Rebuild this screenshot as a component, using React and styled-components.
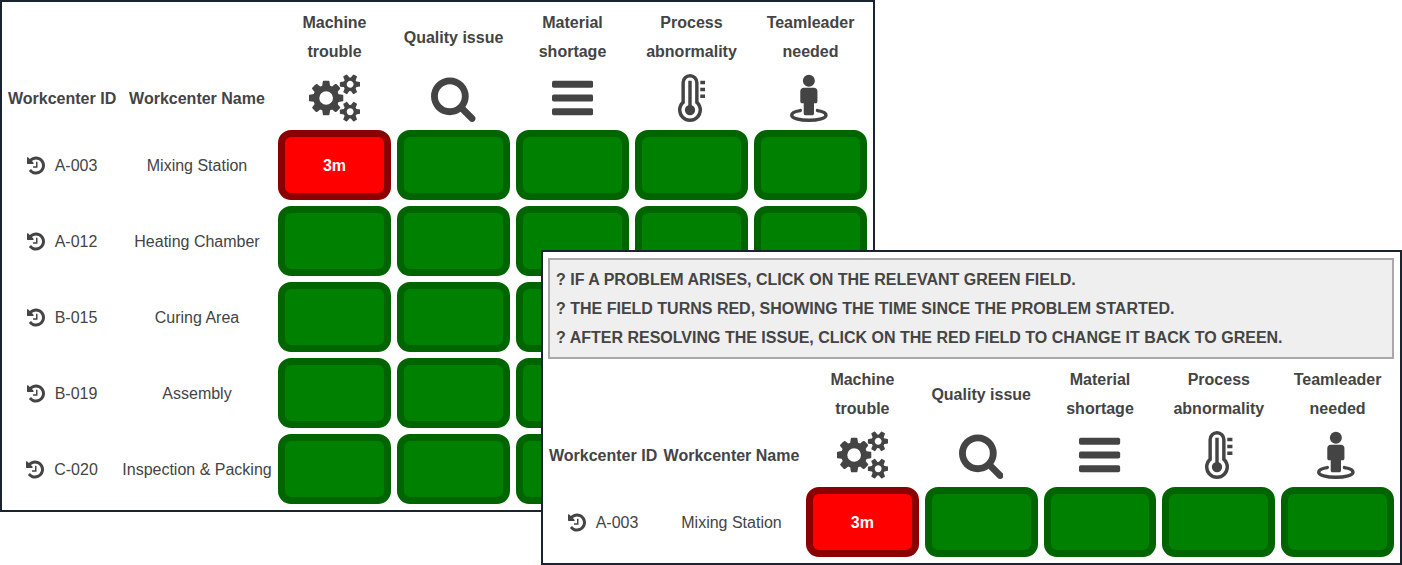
import React from "react";
import styled, { createGlobalStyle } from "styled-components";

const GlobalStyle = createGlobalStyle`
  *, *::before, *::after { box-sizing: border-box; }
  body {
    margin: 0;
    background: #fff;
    color: #444;
    font: 16px/29px "Liberation Sans", Arial, sans-serif;
  }
`;

const Page = styled.main`
  display: grid;
  grid-template-columns: 100%;
  align-items: start;
`;

const Panel = styled.section`
  grid-area: 1 / 1;
  width: 100%;
  max-width: ${(p) => (p.$front ? "861px" : "875px")};
  justify-self: ${(p) => (p.$front ? "end" : "start")};
  margin-top: ${(p) => (p.$front ? "250px" : "0")};
  border: 2px solid #1b2230;
  background: #fff;
`;

const Notice = styled.div`
  margin: 6px 6px 0 5px;
  padding: 5px 6px;
  border: 2px solid #a9a9a9;
  background: #efefef;
  font-weight: bold;
  text-transform: uppercase;
`;

const NoticeLine = styled.p`
  margin: 0;
`;

const Board = styled.table`
  width: 100%;
  table-layout: fixed;
  border-spacing: 6px;
`;

const IdColumn = styled.col`
  width: 108px;
`;

const NameColumn = styled.col`
  width: ${(p) => (p.$wide ? "150px" : "137px")};
`;

const LabelCell = styled.th`
  height: 58px;
  padding: 0 1px;
`;

const IconCell = styled.th`
  height: 52px;
  padding: 0;
  white-space: nowrap;
`;

const Cell = styled.td`
  padding: 0;
  height: 70px;
  text-align: center;
  white-space: nowrap;
`;

const IdGroup = styled.div`
  display: flex;
  align-items: center;
  justify-content: center;
  gap: 10px;
`;

const HistoryButton = styled.button`
  display: block;
  padding: 0;
  border: 0;
  background: none;
  color: inherit;
  cursor: pointer;
`;

const StatusButton = styled.button`
  display: block;
  width: 100%;
  height: 70px;
  padding: 0;
  border: 7px solid ${(p) => (p.$alert ? "#8b0000" : "#006400")};
  border-radius: 13px;
  background: ${(p) => (p.$alert ? "#f00" : "#008000")};
  color: #fff;
  font: bold 16px/29px "Liberation Sans", Arial, sans-serif;
  cursor: pointer;
`;

const Glyph = styled.svg`
  display: block;
  height: ${(p) => (p.$small ? "21px" : "48px")};
  margin: 0 auto;
  fill: currentColor;
`;

const smallCog =
  "v140q0 16-149 31-12 27-30 52 51 113 51 138 0 4-4 7-122 71-124 71-8 0-46-47t-52-68q-20 2-30 2t-30-2q-14 21-52 68t-46 47q-2 0-124-71-4-3-4-7 0-25 51-138-18-25-30-52-149-15-149-31v-140q0-16 149-31 13-29 30-52-51-113-51-138 0-4 4-7 4-2 35-20t59-34 30-16q8 0 46 46.5t52 67.5q20-2 30-2t30 2q51-71 92-112l6-2q4 0 124 70 4 3 4 7 0 25-51 138 17 23 30 52 149 15 149 31z";

const CogsIcon = () => (
  <Glyph viewBox="-64 0 1920 1792" aria-hidden="true">
    <path
      d={
        "M832 896q0-106-75-181t-181-75-181 75-75 181 75 181 181 75 181-75 75-181zm768 512q0-52-38-90t-90-38-90 38-38 90q0 53 37.5 90.5t90.5 37.5 90.5-37.5 37.5-90.5zm0-1024q0-52-38-90t-90-38-90 38-38 90q0 53 37.5 90.5t90.5 37.5 90.5-37.5 37.5-90.5zm-384 421v185q0 10-7 19.5t-16 10.5l-155 24q-11 35-32 76 34 48 90 115 7 11 7 20 0 12-7 19-23 30-82.5 89.5t-78.5 59.5q-11 0-21-7l-115-90q-37 19-77 31-11 108-23 155-7 24-30 24h-186q-11 0-20-7.5t-10-17.5l-23-153q-34-10-75-31l-118 89q-7 7-20 7-11 0-21-8-144-133-144-160 0-9 7-19 10-14 41-53t47-61q-23-44-35-82l-152-24q-10-1-17-9.5t-7-19.5v-185q0-10 7-19.5t16-10.5l155-24q11-35 32-76-34-48-90-115-7-11-7-20 0-12 7-20 22-30 82-89t79-59q11 0 21 7l115 90q34-18 77-32 11-108 23-154 7-24 30-24h186q11 0 20 7.5t10 17.5l23 153q34 10 75 31l118-89q8-7 20-7 11 0 21 8 144 133 144 160 0 8-7 19-12 16-42 54t-45 60q23 48 34 82l152 23q10 2 17 10.5t7 19.5zm640 533" +
        smallCog +
        "m0-1024" +
        smallCog
      }
    />
  </Glyph>
);

const SearchIcon = () => (
  <Glyph viewBox="64 0 1664 1792" aria-hidden="true">
    <path d="M1216 832q0-185-131.5-316.5t-316.5-131.5-316.5 131.5-131.5 316.5 131.5 316.5 316.5 131.5 316.5-131.5 131.5-316.5zm512 832q0 52-38 90t-90 38q-54 0-90-38l-343-342q-179 124-399 124-143 0-273.5-55.5t-225-150-150-225-55.5-273.5 55.5-273.5 150-225 225-150 273.5-55.5 273.5 55.5 225 150 150 225 55.5 273.5q0 220-124 399l343 343q37 37 37 90z" />
  </Glyph>
);

const BarsIcon = () => (
  <Glyph viewBox="128 0 1536 1792" aria-hidden="true">
    <rect x="128" y="256" width="1536" height="256" rx="64" />
    <rect x="128" y="768" width="1536" height="256" rx="64" />
    <rect x="128" y="1280" width="1536" height="256" rx="64" />
  </Glyph>
);

const ThermometerIcon = () => (
  <Glyph viewBox="0 0 1024 1792" aria-hidden="true">
    <path d="M640 1344q0 80-56 136t-136 56-136-56-56-136q0-60 35-110t93-71V256h128v907q58 21 93 71t35 110zm128 0q0-77-34-144t-94-112V320q0-80-56-136t-136-56-136 56-56 136v768q-60 45-94 112t-34 144q0 133 93.5 226.5T448 1664t226.5-93.5T768 1344zm128 0q0 185-131.5 316.5T448 1792t-316.5-131.5T0 1344q0-182 128-313V320q0-133 93.5-226.5T448 0t226.5 93.5T768 320v711q128 131 128 313zm128-576v128H832V768h192zm0-256v128H832V512h192zm0-256v128H832V256h192z" />
  </Glyph>
);

const PersonIcon = () => (
  <Glyph viewBox="0 0 1536 1792" aria-hidden="true">
    <circle cx="704" cy="256" r="224" />
    <path d="M512 512h384q53 0 90.500 37.500T1024 640v384q0 26-19 45t-45 19h-64v384q0 26-19 45t-45 19H576q-26 0-45-19t-19-45v-384h-64q-26 0-45-19t-19-45V640q0-53 37.500-90.500T512 512z" />
    <path
      d="M384 1366C210 1392 64 1452 64 1536c0 106 286 192 640 192s640-86 640-192c0-84-146-144-320-170"
      fill="none"
      stroke="currentColor"
      strokeWidth="128"
      strokeLinecap="round"
    />
  </Glyph>
);

const HistoryIcon = () => (
  <Glyph $small viewBox="128 0 1536 1792" aria-hidden="true">
    <path d="M1664 896q0 156-61 298t-164 245-245 164-298 61q-172 0-327-72.5t-264-204.5q-7-10-6.500-22.500t8.500-20.500l137-138q10-9 25-9 16 2 23 12 73 95 179 147t225 52q104 0 198.500-40.500t163.500-109.500 109.500-163.500 40.500-198.500-40.500-198.500-109.500-163.500-163.500-109.500-198.500-40.500q-98 0-188 35.500t-160 101.500l137 138q31 30 14 69-17 40-59 40h-448q-26 0-45-19t-19-45v-448q0-42 40-59 39-17 69 14l130 129q107-101 244.500-156.500t284.500-55.500q156 0 298 61t245 164 164 245 61 298zm-640-288v448q0 14-9 23t-23 9h-320q-14 0-23-9t-9-23v-64q0-14 9-23t23-9h224v-352q0-14 9-23t23-9h64q14 0 23 9t9 23z" />
  </Glyph>
);

const issues = [
  { label: "Machine trouble", Icon: CogsIcon },
  { label: "Quality issue", Icon: SearchIcon },
  { label: "Material shortage", Icon: BarsIcon },
  { label: "Process abnormality", Icon: ThermometerIcon },
  { label: "Teamleader needed", Icon: PersonIcon },
];

const workcenters = [
  { id: "A-003", name: "Mixing Station", open: { "Machine trouble": "3m" } },
  { id: "A-012", name: "Heating Chamber", open: {} },
  { id: "B-015", name: "Curing Area", open: {} },
  { id: "B-019", name: "Assembly", open: {} },
  { id: "C-020", name: "Inspection & Packing", open: {} },
];

function AndonBoard({ rows, wide }) {
  return (
    <Board>
      <colgroup>
        <IdColumn />
        <NameColumn $wide={wide} />
        {issues.map(({ label }) => (
          <col key={label} />
        ))}
      </colgroup>
      <thead>
        <tr>
          <LabelCell as="td" colSpan={2} />
          {issues.map(({ label }) => (
            <LabelCell key={label} scope="col">
              {label}
            </LabelCell>
          ))}
        </tr>
        <tr>
          <IconCell scope="col">Workcenter ID</IconCell>
          <IconCell scope="col">Workcenter Name</IconCell>
          {issues.map(({ label, Icon }) => (
            <IconCell as="td" key={label}>
              <Icon />
            </IconCell>
          ))}
        </tr>
      </thead>
      <tbody>
        {rows.map((row) => (
          <tr key={row.id}>
            <Cell>
              <IdGroup>
                <HistoryButton type="button" aria-label={`History of ${row.id}`}>
                  <HistoryIcon />
                </HistoryButton>
                <span>{row.id}</span>
              </IdGroup>
            </Cell>
            <Cell>{row.name}</Cell>
            {issues.map(({ label }) => (
              <Cell key={label}>
                <StatusButton
                  type="button"
                  $alert={Boolean(row.open[label])}
                  aria-label={`${row.name}, ${label}: ${row.open[label] || "OK"}`}
                >
                  {row.open[label]}
                </StatusButton>
              </Cell>
            ))}
          </tr>
        ))}
      </tbody>
    </Board>
  );
}

export default function App() {
  return (
    <>
      <GlobalStyle />
      <Page>
        <Panel>
          <AndonBoard rows={workcenters} wide />
        </Panel>
        <Panel $front>
          <Notice>
            <NoticeLine>? If a problem arises, click on the relevant green field.</NoticeLine>
            <NoticeLine>? The field turns red, showing the time since the problem started.</NoticeLine>
            <NoticeLine>? After resolving the issue, click on the red field to change it back to green.</NoticeLine>
          </Notice>
          <AndonBoard rows={workcenters.slice(0, 1)} />
        </Panel>
      </Page>
    </>
  );
}
